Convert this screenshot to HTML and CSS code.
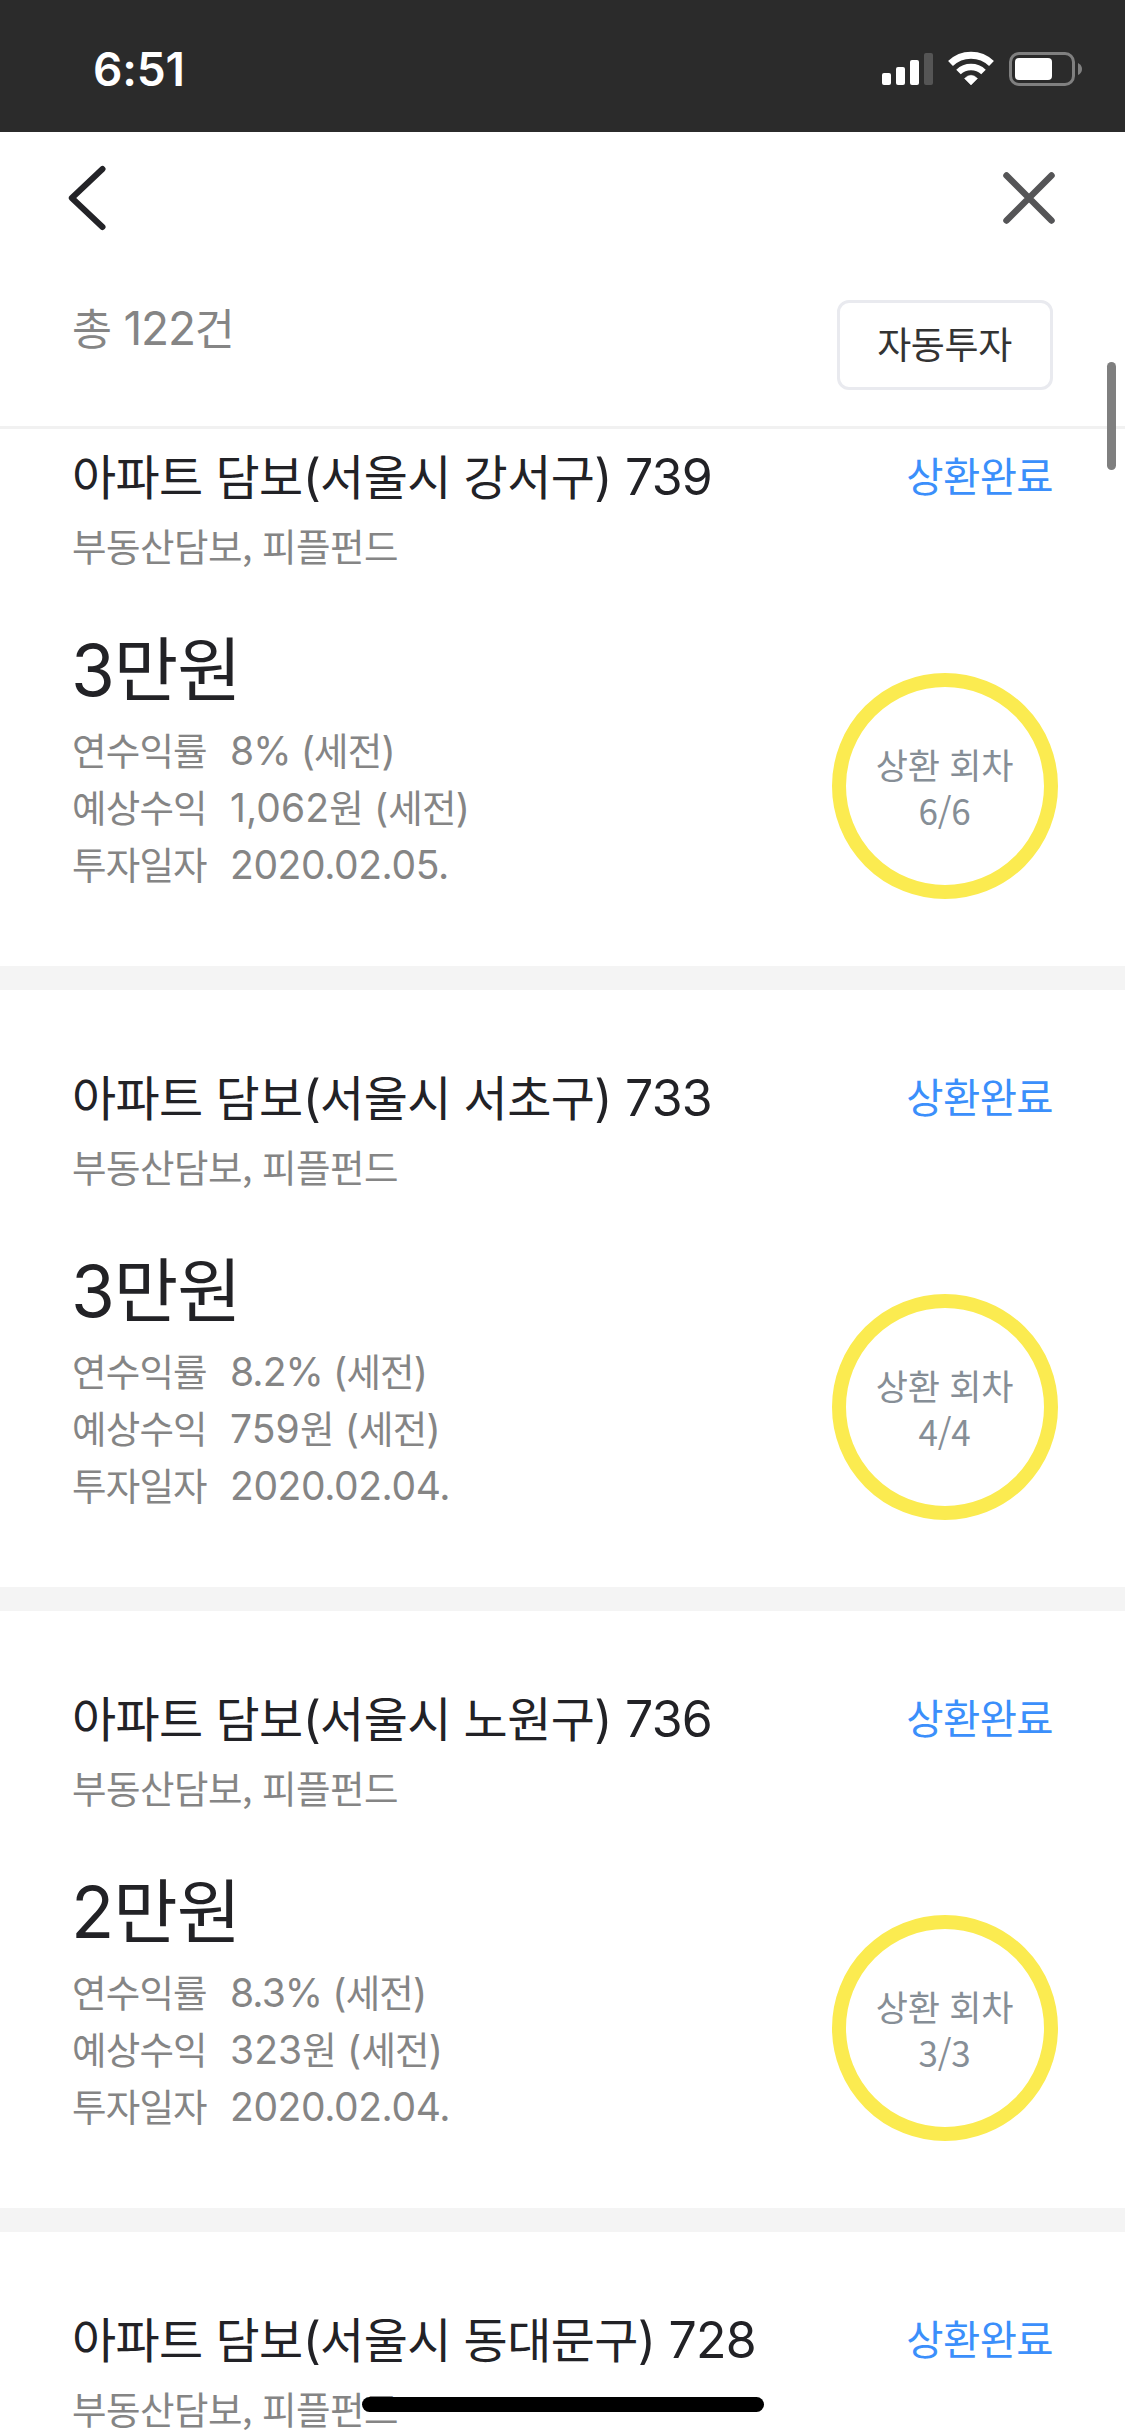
FILE: index.html
```html
<!DOCTYPE html>
<html lang="ko">
<head>
<meta charset="utf-8">
<title>투자 내역</title>
<link rel="stylesheet" href="styles.css">
</head>
<body>
<div class="screen">
  <header class="status-bar">
    <span class="time">6:51</span>
    <svg class="status-icons" width="202" height="36" viewBox="881 51 202 36">
      <g fill="#fff">
        <rect x="882" y="73" width="9" height="12" rx="2"/>
        <rect x="896" y="67" width="9" height="18" rx="2"/>
        <rect x="910" y="60" width="9" height="25" rx="2"/>
        <rect x="924" y="53" width="9" height="32" rx="2" fill="#555"/>
        <path d="M971 85l-6.500-6.500q6.500-6.500 13 0z" stroke="#fff" stroke-width="0.500"/>
      </g>
      <path d="M950.500 63.500a29.500 29.500 0 0 1 41 0" fill="none" stroke="#fff" stroke-width="7"/>
      <path d="M958.500 72a18 18 0 0 1 25 0" fill="none" stroke="#fff" stroke-width="6.500"/>
      <rect x="1010.500" y="53.500" width="63" height="31" rx="8.500" fill="none" stroke="#808080" stroke-width="3"/>
      <rect x="1015" y="58" width="37" height="22" rx="4" fill="#fff"/>
      <path d="M1078 63q4 2 4 6t-4 6z" fill="#808080"/>
    </svg>
  </header>
  <nav class="nav-bar">
    <svg width="38" height="66" viewBox="68 165 38 66" fill="none" stroke="#232327" stroke-width="6" stroke-linecap="round" stroke-linejoin="round"><path d="M102.500 169L71.800 198L102.500 227"/></svg>
    <svg width="54" height="54" viewBox="1002 171 54 54" fill="none" stroke="#555557" stroke-width="6.500" stroke-linecap="round"><path d="M1006.500 175.500L1051.500 220.500M1051.500 175.500L1006.500 220.500"/></svg>
  </nav>
  <div class="summary">
    <span class="total">총 <span class="latin">122</span>건</span>
    <button class="auto">자동투자</button>
  </div>
  <main class="list">
    <article class="card first">
      <div class="head"><h2>아파트 담보<b>(</b>서울시 강서구<b>) 739</b></h2><span class="state">상환완료</span></div>
      <p class="kind">부동산담보, 피플펀드</p>
      <div class="body">
        <div class="info"><p class="amount"><b>3</b>만원</p>
          <dl><dt>연수익률</dt><dd><b class="rate">8% (</b>세전<b>)</b></dd><dt>예상수익</dt><dd><b>1,062</b>원<b> (</b>세전<b>)</b></dd><dt>투자일자</dt><dd><b class="date">2020.02.05.</b></dd></dl></div>
        <div class="ring"><p>상환 회차<br>6/6</p></div>
      </div>
    </article>
    <article class="card">
      <div class="head"><h2>아파트 담보<b>(</b>서울시 서초구<b>) 733</b></h2><span class="state">상환완료</span></div>
      <p class="kind">부동산담보, 피플펀드</p>
      <div class="body">
        <div class="info"><p class="amount"><b>3</b>만원</p>
          <dl><dt>연수익률</dt><dd><b class="rate">8.2% (</b>세전<b>)</b></dd><dt>예상수익</dt><dd><b>759</b>원<b> (</b>세전<b>)</b></dd><dt>투자일자</dt><dd><b class="date">2020.02.04.</b></dd></dl></div>
        <div class="ring"><p>상환 회차<br>4/4</p></div>
      </div>
    </article>
    <article class="card">
      <div class="head"><h2>아파트 담보<b>(</b>서울시 노원구<b>) 736</b></h2><span class="state">상환완료</span></div>
      <p class="kind">부동산담보, 피플펀드</p>
      <div class="body">
        <div class="info"><p class="amount"><b>2</b>만원</p>
          <dl><dt>연수익률</dt><dd><b class="rate">8.3% (</b>세전<b>)</b></dd><dt>예상수익</dt><dd><b>323</b>원<b> (</b>세전<b>)</b></dd><dt>투자일자</dt><dd><b class="date">2020.02.04.</b></dd></dl></div>
        <div class="ring"><p>상환 회차<br>3/3</p></div>
      </div>
    </article>
    <article class="card">
      <div class="head"><h2>아파트 담보<b>(</b>서울시 동대문구<b>) 728</b></h2><span class="state">상환완료</span></div>
      <p class="kind">부동산담보, 피플펀드</p>
    </article>
  </main>
  <div class="scrollbar"></div>
  <div class="home-indicator"></div>
</div>
</body>
</html>
```

FILE: styles.css
```css
* { box-sizing: border-box; margin: 0; padding: 0; }
body { background: #fff; }
.screen {
  position: relative;
  width: 1125px;
  height: 2436px;
  overflow: hidden;
  font-family: "Noto Sans CJK KR", sans-serif;
  font-weight: 400;
  color: #222226;
}
b, .latin { font-family: Inter, "Noto Sans CJK KR", sans-serif; font-weight: 400; }
.status-bar {
  display: flex;
  justify-content: space-between;
  align-items: center;
  height: 132px;
  padding: 6px 42px 0 93px;
  background: #2b2b2b;
}
.time { font: 600 46px/56px Inter, sans-serif; color: #fff; letter-spacing: -0.2px; }
.nav-bar {
  display: flex;
  justify-content: space-between;
  align-items: center;
  height: 132px;
  padding: 0 69px 0 68px;
}
.summary {
  display: flex;
  justify-content: space-between;
  align-items: flex-start;
  height: 165px;
  padding: 36px 72px 0;
  border-bottom: 3px solid #f1f1f1;
}
.total { margin-top: -1px; font-size: 43.5px; line-height: 56px; color: #858585; letter-spacing: -0.3px; }
.total .latin { font-size: 46px; letter-spacing: -1.2px; }
.auto {
  width: 216px;
  height: 90px;
  padding: 0 1px 4px 0;
  border: 3px solid #e9eaef;
  border-radius: 12px;
  background: #fff;
  font: 400 37px/60px "Noto Sans CJK KR", sans-serif;
  letter-spacing: -0.4px;
  color: #333;
}
.card { height: 621px; padding: 70px 72px 0; border-bottom: 24px solid #f4f4f4; }
.first { height: 561px; padding-top: 10px; }
.head { display: flex; justify-content: space-between; align-items: center; height: 72px; }
h2 { font-size: 48px; font-weight: 400; line-height: 72px; letter-spacing: -0.6px; }
h2 b { font-size: 50px; letter-spacing: -0.8px; }
.state { font-size: 40.5px; line-height: 60px; letter-spacing: -0.6px; color: #3b8ffb; }
.kind { margin-top: 4px; font-size: 37.5px; line-height: 60px; letter-spacing: -0.5px; color: #858585; }
.body { display: flex; justify-content: space-between; margin-top: 41px; }
.info { width: 500px; }
.amount { margin-left: -1px; font-size: 70px; line-height: 100px; letter-spacing: -1px; }
.amount b { font-size: 71px; }
dl {
  display: grid;
  grid-template-columns: 158px 1fr;
  grid-auto-rows: 57px;
  color: #858585;
  font-size: 37.5px;
  line-height: 57px;
  letter-spacing: -0.8px;
  white-space: pre;
}
dd b { font-size: 39px; letter-spacing: 0.1px; }
dd .rate { letter-spacing: -0.9px; }
dd .date { letter-spacing: -0.4px; }
.ring {
  display: flex;
  align-items: center;
  justify-content: center;
  width: 226px;
  height: 226px;
  margin: 57px -5px 0 0;
  padding: 2px 1px 0 0;
  border: 14px solid #fbeb50;
  border-radius: 50%;
  font-size: 35px;
  line-height: 46px;
  letter-spacing: -0.2px;
  text-align: center;
  color: #868e96;
}
.scrollbar { position: absolute; left: 1107px; top: 362px; width: 9px; height: 108px; border-radius: 5px; background: #7f7f7f; }
.home-indicator { position: absolute; left: 362px; top: 2397px; width: 402px; height: 15px; border-radius: 8px; background: #000; }
```
